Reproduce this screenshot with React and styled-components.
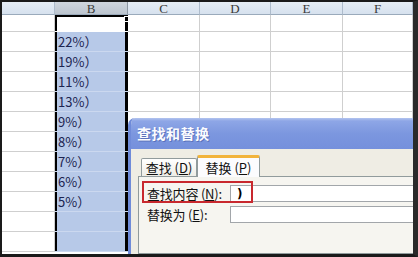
import React from "react";
import styled, { createGlobalStyle } from "styled-components";

const GlobalStyle = createGlobalStyle`
  html, body {
    margin: 0;
    padding: 0;
    background: #fff;
  }
  * {
    box-sizing: border-box;
  }
`;

const columns = ["A", "B", "C", "D", "E", "F"];
const values = ["", "22%）", "19%）", "11%）", "13%）", "9%）", "8%）", "7%）", "6%）", "5%）", "", ""];

const App = () => {
  return (
    <>
      <GlobalStyle />
      <Frame>
        <Sheet>
          {columns.map((c) => (
            <HeadCell key={c} $selected={c === "B"}>
              {c === "A" ? "" : c}
            </HeadCell>
          ))}
          {values.map((v, r) =>
            columns.map((c) =>
              c === "B" ? (
                <SelCell key={c + r} $active={r === 0} $first={r === 0}>
                  {v}
                  {r === 0 && <FillHandle />}
                </SelCell>
              ) : (
                <Cell key={c + r} $first={r === 0} />
              )
            )
          )}
        </Sheet>

        <Dialog>
          <TitleBar>查找和替换</TitleBar>
          <Body>
            <Tabs>
              <Tab>
                查找 (<u>D</u>)
              </Tab>
              <Tab $active>
                替换 (<u>P</u>)
              </Tab>
            </Tabs>
            <Panel>
              <FormRow>
                <Label>
                  查找内容 (<u>N</u>):
                </Label>
                <Input $bold>)</Input>
              </FormRow>
              <FormRow>
                <Label>
                  替换为 (<u>E</u>):
                </Label>
                <Input />
              </FormRow>
            </Panel>
            <Highlight />
          </Body>
        </Dialog>
      </Frame>
    </>
  );
};

export default App;

const Frame = styled.div`
  position: relative;
  width: 418px;
  height: 257px;
  border-top: 2px solid #1a1a1a;
  border-left: 2px solid #1a1a1a;
  border-right: 5px solid #2a2a2a;
  border-bottom: 3px solid #1a1a1a;
  overflow: hidden;
  background: #fff;
`;

const Sheet = styled.div`
  display: grid;
  grid-template-columns: 53px 73px 72px 71px 72px 70px;
  grid-template-rows: 13px 17px repeat(11, 20px);
`;

const HeadCell = styled.div`
  display: flex;
  align-items: center;
  justify-content: center;
  font-family: "Liberation Serif", "DejaVu Serif", serif;
  font-size: 13px;
  line-height: 1;
  color: #3a3a3a;
  background: ${(p) =>
    p.$selected
      ? "linear-gradient(#cfd6de, #bcc5cf)"
      : "linear-gradient(#e6edf5, #d6e1ee)"};
  border-right: 1px solid ${(p) => (p.$selected ? "#8e98a4" : "#aebccc")};
  border-bottom: 1px solid #9aaabb;
  padding-top: 1px;
`;

const Cell = styled.div`
  border-right: 1px solid #cfcfcf;
  border-bottom: 1px solid #cfcfcf;
`;

const SelCell = styled.div`
  position: relative;
  display: flex;
  align-items: center;
  padding-left: 3px;
  font-family: "Noto Sans CJK SC", "DejaVu Sans", sans-serif;
  font-size: 13px;
  color: #1c2450;
  background: ${(p) => (p.$active ? "#fff" : "#b7c9e8")};
  border-bottom: 1px solid ${(p) => (p.$active ? "#fff" : "#cbd8ef")};
  box-shadow: inset 2px 0 #000, inset -3px 0 #000
    ${(p) => (p.$first ? ", inset 0 2px #000" : "")};
`;

const FillHandle = styled.span`
  position: absolute;
  right: -1px;
  top: 1px;
  width: 5px;
  height: 6px;
  background: #000;
  border: 1px solid #fff;
`;

const Dialog = styled.div`
  position: absolute;
  left: 126px;
  top: 116px;
  width: 300px;
  height: 150px;
  display: flex;
  flex-direction: column;
  border-left: 3px solid #6f8bd9;
  border-top-left-radius: 7px;
  background: #efede4;
  overflow: hidden;
`;

const TitleBar = styled.div`
  height: 31px;
  flex-shrink: 0;
  display: flex;
  align-items: center;
  padding-left: 6px;
  padding-bottom: 2px;
  font-family: "Noto Sans CJK SC", sans-serif;
  font-size: 14px;
  font-weight: bold;
  color: #fbfcff;
  letter-spacing: 0.5px;
  text-shadow: 1px 1px 0 #5a72bc;
  background: linear-gradient(
    #b3c4ef 0,
    #8ea6e6 3px,
    #7c97df 50%,
    #7590dc 100%
  );
`;

const Body = styled.div`
  position: relative;
  flex: 1;
  padding: 6px 0 0 7px;
  background: #efede4;
`;

const Tabs = styled.div`
  display: flex;
  align-items: flex-end;
  height: 21px;
  padding-left: 3px;
  position: relative;
  z-index: 1;
`;

const Tab = styled.div`
  display: flex;
  align-items: center;
  justify-content: center;
  font-family: "Noto Sans CJK SC", sans-serif;
  font-size: 13px;
  color: #111;
  white-space: pre;
  border: 1px solid #919b9c;
  border-bottom: none;
  width: ${(p) => (p.$active ? "63px" : "56px")};
  height: ${(p) => (p.$active ? "22px" : "18px")};
  margin-bottom: ${(p) => (p.$active ? "-1px" : "0")};
  border-top: ${(p) => (p.$active ? "3px solid #f2b43c" : "1px solid #919b9c")};
  background: ${(p) =>
    p.$active ? "#fcfcfe" : "linear-gradient(#ffffff, #eeede6)"};
  border-radius: 2px 2px 0 0;

  u {
    text-decoration-thickness: 1px;
  }
`;

const Panel = styled.div`
  border: 1px solid #919b9c;
  background: #f6f5f0;
  padding: 8px 0 30px 8px;
  display: flex;
  flex-direction: column;
  gap: 4px;
`;

const FormRow = styled.div`
  display: flex;
  align-items: center;
  height: 17px;
`;

const Label = styled.div`
  width: 83px;
  flex-shrink: 0;
  font-family: "Noto Sans CJK SC", sans-serif;
  font-size: 13px;
  color: #111;
  white-space: pre;
  letter-spacing: -0.2px;
`;

const Input = styled.div`
  flex: 1;
  height: 17px;
  display: flex;
  align-items: center;
  padding-left: 6px;
  border: 1px solid #a2a6aa;
  background: #fff;
  font-family: "DejaVu Sans", sans-serif;
  font-size: 12px;
  font-weight: ${(p) => (p.$bold ? "bold" : "normal")};
  color: #000;
`;

const Highlight = styled.div`
  position: absolute;
  left: 11px;
  top: 32px;
  width: 111px;
  height: 22px;
  border: 2px solid #c8282e;
  pointer-events: none;
`;
